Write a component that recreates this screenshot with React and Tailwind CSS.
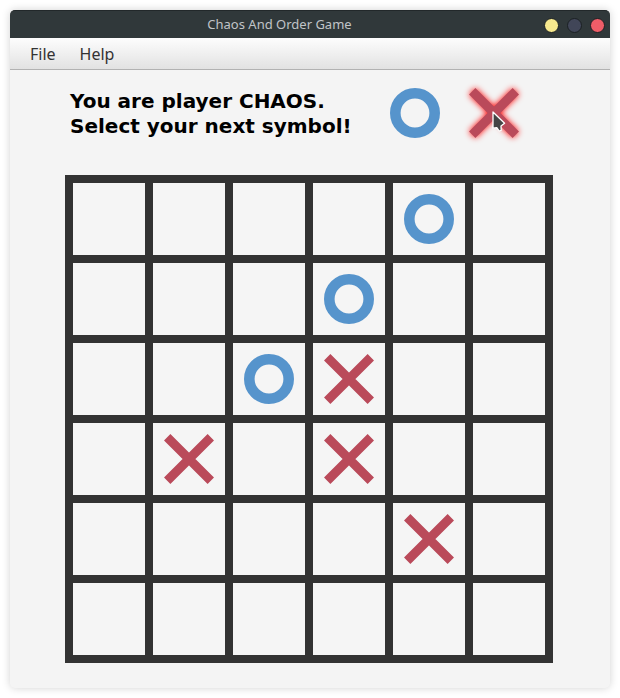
const BOARD = [
  "....O.",
  "...O..",
  "..OX..",
  ".X.X..",
  "....X.",
  "......",
];

function Circle() {
  return (
    <svg viewBox="0 0 50 50" className="block size-[50px]" aria-hidden="true">
      <circle cx="25" cy="25" r="19.7" fill="none" stroke="#5694cc" strokeWidth="10.6" />
    </svg>
  );
}

function Cross({ glow = false }) {
  return (
    <svg
      viewBox="0 0 50 50"
      className={
        glow
          ? "block size-[50px] overflow-visible drop-shadow-[0_0_3px_#ff0000]"
          : "block size-[50px]"
      }
      aria-hidden="true"
    >
      <path d="M3.2 3.2 46.8 46.8M46.8 3.2 3.2 46.8" fill="none" stroke="#ba4a5a" strokeWidth="9" />
    </svg>
  );
}

function Pointer() {
  return (
    <svg
      viewBox="0 0 14 22"
      className="pointer-events-none absolute top-[22px] left-[22px] h-[22px] w-[14px] overflow-visible"
      aria-hidden="true"
    >
      <path
        d="M2 2V18.2L5.8 17.6 8.2 21 10.2 20.4 10 16 13.6 13.2Z"
        fill="#444444"
        stroke="#ffffff"
        strokeWidth="1.3"
        strokeLinejoin="round"
      />
    </svg>
  );
}

function TitleBar() {
  return (
    <header className="flex h-7 items-center rounded-t-[5px] border-t border-[#22282a] bg-[#30383a] px-[5px]">
      <h1 className="flex-1 pb-px text-center font-['Noto_Sans',sans-serif] text-[13px] leading-5 text-[#c0c4c8]">
        Chaos And Order Game
      </h1>
      <div className="flex gap-2 pt-px">
        <button aria-label="Minimize" className="size-[15px] rounded-full border border-[#1b2023] bg-[#f7e98e]" />
        <button aria-label="Maximize" className="size-[15px] rounded-full border border-[#1b2023] bg-[#414658]" />
        <button aria-label="Close" className="size-[15px] rounded-full border border-[#1b2023] bg-[#ee5d68]" />
      </div>
    </header>
  );
}

function MenuBar() {
  return (
    <nav className="flex h-8 items-center gap-6 border-b border-[#b2b2b2] bg-linear-to-b from-[#fdfdfd] to-[#e2e2e2] px-5 font-['Noto_Sans',sans-serif] text-[16px] leading-5 text-[#333333]">
      <button>File</button>
      <button>Help</button>
    </nav>
  );
}

export default function App() {
  return (
    <div className="min-h-screen bg-white p-2.5">
      <div className="rounded-[5px] bg-[#f4f4f4] shadow-[0_0_8px_rgba(0,0,0,0.18)]">
        <TitleBar />
        <MenuBar />
        <main className="mx-auto w-[490px] pt-[18px] pb-[25px]">
          <section className="flex items-start px-[5px]">
            <p className="w-80 pt-px font-['DejaVu_Sans',sans-serif] text-[20px] leading-[25px] font-bold text-black">
              You are player CHAOS.
              <br />
              Select your next symbol!
            </p>
            <div className="flex gap-[29px]">
              <button aria-label="Select circle">
                <Circle />
              </button>
              <button aria-label="Select cross" className="relative">
                <Cross glow />
                <Pointer />
              </button>
            </div>
          </section>
          <section
            aria-label="Board"
            className="mt-9 grid w-fit grid-cols-[repeat(6,72px)] gap-2 bg-[#333333] p-2"
          >
            {BOARD.flatMap((row, r) =>
              [...row].map((mark, c) => (
                <button
                  key={`${r}-${c}`}
                  aria-label={`Row ${r + 1}, column ${c + 1}`}
                  className="flex h-[72px] items-center justify-center bg-[#f5f5f5]"
                >
                  {mark === "O" && <Circle />}
                  {mark === "X" && <Cross />}
                </button>
              ))
            )}
          </section>
        </main>
      </div>
    </div>
  );
}
